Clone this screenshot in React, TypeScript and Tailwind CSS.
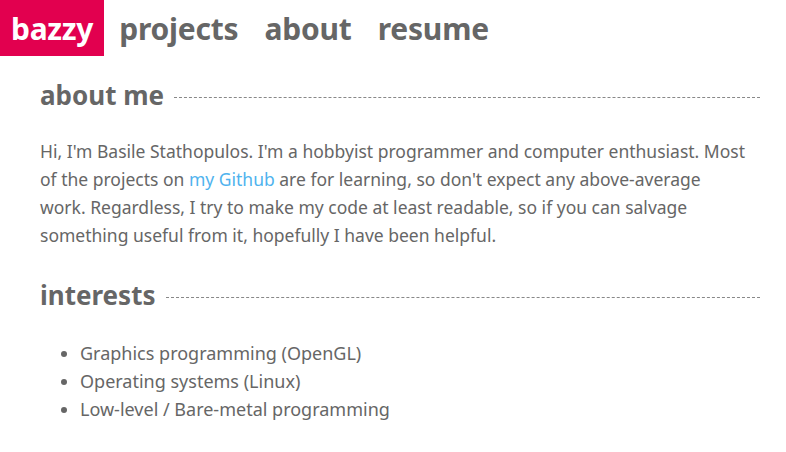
export default function App() {
  const font = { fontFamily: '"Noto Sans", "Open Sans", sans-serif' }

  return (
    <div className="min-h-screen bg-white text-[#666666]" style={font}>
      <header className="flex h-[56px] items-center">
        <a className="flex h-full items-center bg-[#e2004f] px-[11px] text-[30px] font-bold tracking-[-0.3px] text-white">
          bazzy
        </a>
        <nav className="flex items-center gap-[26px] pl-[15px] text-[30px] font-bold tracking-[-0.2px]">
          <a>projects</a>
          <a>about</a>
          <a>resume</a>
        </nav>
      </header>

      <main className="w-[760px] pl-[40px]">
        <section className="pt-[20px]">
          <h2 className="flex items-center gap-[10px] text-[26px] font-bold">
            about me
            <span className="mt-[4px] flex-1 border-t border-dashed border-[#888888]" />
          </h2>
          <p className="mt-[22px] text-[17.5px] leading-[28px]">
            Hi, I'm Basile Stathopulos. I'm a hobbyist programmer and computer enthusiast. Most
            <br />
            of the projects on <a className="text-[#4fb3ee]">my Github</a> are for learning, so
            don't expect any above-average
            <br />
            work. Regardless, I try to make my code at least readable, so if you can salvage
            <br />
            something useful from it, hopefully I have been helpful.
          </p>
        </section>

        <section className="pt-[27px]">
          <h2 className="flex items-center gap-[10px] text-[26px] font-bold">
            interests
            <span className="mt-[4px] flex-1 border-t border-dashed border-[#888888]" />
          </h2>
          <ul className="mt-[24px] list-disc pl-[40px] text-[18px] leading-[28px]">
            <li>Graphics programming (OpenGL)</li>
            <li>Operating systems (Linux)</li>
            <li>Low-level / Bare-metal programming</li>
          </ul>
        </section>
      </main>
    </div>
  )
}
